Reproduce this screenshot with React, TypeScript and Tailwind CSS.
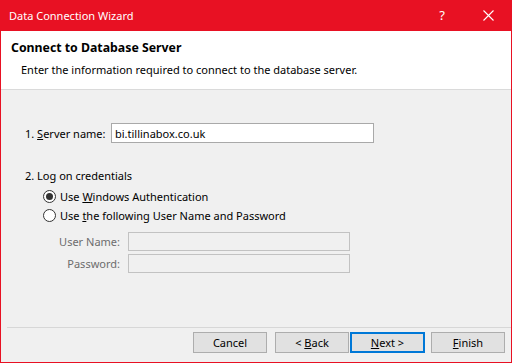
import React from "react";

function Radio({ checked }: { checked?: boolean }) {
  return (
    <div className="w-[13px] h-[13px] rounded-full border border-[#333333] bg-white flex items-center justify-center shrink-0">
      {checked && <div className="w-[7px] h-[7px] rounded-full bg-[#333333]" />}
    </div>
  );
}

function Btn({ children, primary }: { children: React.ReactNode; primary?: boolean }) {
  return (
    <div
      className={
        "h-[21px] flex items-center justify-center bg-[#e1e1e1] text-black " +
        (primary ? "w-[75px] border-2 border-[#0078d7]" : "w-[74px] border border-[#adadad]")
      }
    >
      <span className="whitespace-pre">{children}</span>
    </div>
  );
}

export default function App() {
  return (
    <div
      className="w-[512px] h-[363px] bg-[#e81123] flex flex-col px-[1px] pb-[1px] text-[11px] leading-none"
      style={{ fontFamily: '"Noto Sans", "Segoe UI", sans-serif' }}
    >
      <div className="h-[31px] flex items-center text-white shrink-0">
        <span className="pl-[8px] flex-1 text-[11px]">Data Connection Wizard</span>
        <span className="w-[46px] text-center text-[13px]">?</span>
        <div className="w-[46px] flex items-center justify-center">
          <svg width="11" height="11" viewBox="0 0 11 11">
            <path d="M0.5 0.5L10.5 10.5M10.5 0.5L0.5 10.5" stroke="white" strokeWidth="1.1" />
          </svg>
        </div>
      </div>
      <div className="h-[59px] bg-white border-b border-[#dadada] shrink-0 flex flex-col">
        <div className="pl-[10px] pt-[11px] font-bold text-[12.3px] text-black">Connect to Database Server</div>
        <div className="pl-[20px] pt-[10px] text-black">Enter the information required to connect to the database server.</div>
      </div>
      <div className="flex-1 bg-[#f0f0f0] flex flex-col text-black">
        <div className="flex items-center pt-[33px] pl-[24px]">
          <span className="w-[86px] whitespace-nowrap">
            1. <span className="underline">S</span>erver name:
          </span>
          <div className="w-[263px] h-[20px] bg-white border border-[#a9a9a9] flex items-center pl-[3px]">
            bi.tillinabox.co.uk
          </div>
        </div>
        <div className="pl-[24px] pt-[27px]">2. Log on credentials</div>
        <div className="flex items-center gap-[4px] pl-[42px] pt-[9px]">
          <Radio checked />
          <span>
            Use <span className="underline">W</span>indows Authentication
          </span>
        </div>
        <div className="flex items-center gap-[4px] pl-[42px] pt-[6px]">
          <Radio />
          <span>
            Use <span className="underline">t</span>he following User Name and Password
          </span>
        </div>
        <div className="flex items-center pt-[10px]">
          <span className="w-[127px] text-right pr-[8px] text-[#6d6d6d]">User Name:</span>
          <div className="w-[222px] h-[19px] bg-[#f0f0f0] border border-[#c2c2c2]" />
        </div>
        <div className="flex items-center pt-[3px]">
          <span className="w-[127px] text-right pr-[8px] text-[#6d6d6d]">Password:</span>
          <div className="w-[222px] h-[19px] bg-[#f0f0f0] border border-[#c2c2c2]" />
        </div>
        <div className="flex-1" />
        <div className="ml-[6px] border-t border-[#d7d7d7]" />
        <div className="flex items-center pt-[4px] pb-[9px] pl-[192px]">
          <Btn>Cancel</Btn>
          <div className="w-[8px]" />
          <Btn>
            {"< "}<span className="underline">B</span>ack
          </Btn>
          <div className="w-[1px]" />
          <Btn primary>
            <span className="underline">N</span>{"ext >"}
          </Btn>
          <div className="w-[6px]" />
          <Btn>
            <span className="underline">F</span>inish
          </Btn>
        </div>
      </div>
    </div>
  );
}
